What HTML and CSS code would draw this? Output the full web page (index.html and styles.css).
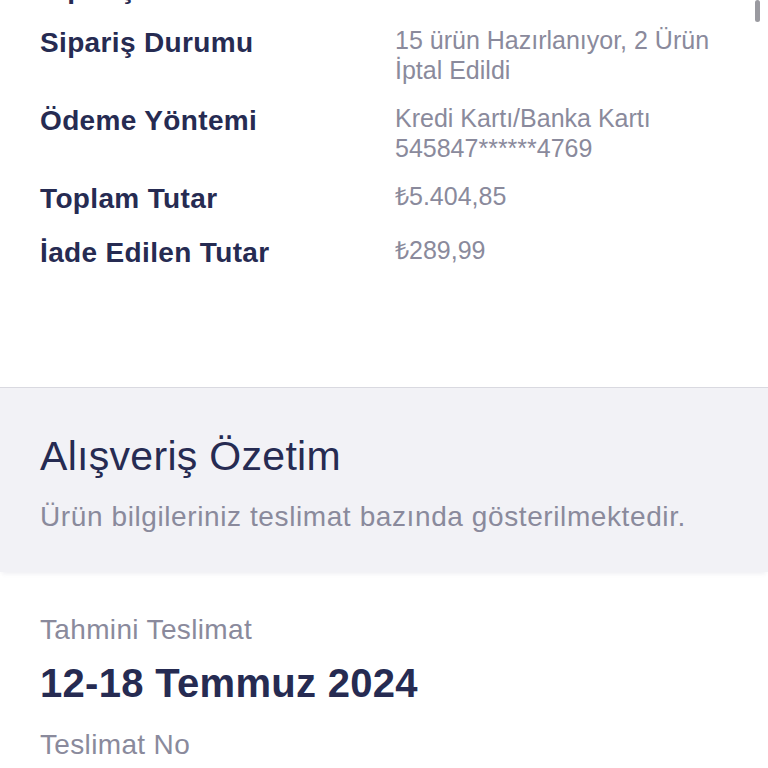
FILE: index.html
```html
<!DOCTYPE html>
<html lang="tr">
<head>
<meta charset="utf-8">
<link rel="stylesheet" href="styles.css">
</head>
<body>
<div class="page">
  <section class="details">
    <div class="row">
      <div class="label">Sipariş Tarihi</div>
      <div class="value">10 Temmuz 2024</div>
    </div>
    <div class="row">
      <div class="label">Sipariş Durumu</div>
      <div class="value">15 ürün Hazırlanıyor, 2 Ürün<br>İptal Edildi</div>
    </div>
    <div class="row">
      <div class="label">Ödeme Yöntemi</div>
      <div class="value">Kredi Kartı/Banka Kartı<br>545847******4769</div>
    </div>
    <div class="row">
      <div class="label">Toplam Tutar</div>
      <div class="value">₺5.404,85</div>
    </div>
    <div class="row">
      <div class="label">İade Edilen Tutar</div>
      <div class="value">₺289,99</div>
    </div>
  </section>
  <section class="summary">
    <h2 class="summary-title">Alışveriş Özetim</h2>
    <p class="summary-sub">Ürün bilgileriniz teslimat bazında gösterilmektedir.</p>
  </section>
  <section class="delivery">
    <div class="muted">Tahmini Teslimat</div>
    <div class="date">12-18 Temmuz 2024</div>
    <div class="muted no">Teslimat No</div>
  </section>
  <div class="scrollbar"></div>
</div>
</body>
</html>
```

FILE: styles.css
```css
html, body {
  margin: 0;
  padding: 0;
  background: #ffffff;
  overflow: hidden;
}
body {
  font-family: "Liberation Sans", Arial, sans-serif;
  color: #262b52;
}
.page {
  position: relative;
  width: 768px;
  height: 768px;
  overflow: hidden;
}
.details {
  display: flex;
  flex-direction: column;
  gap: 18px;
  margin-top: -29px;
  padding: 0 0 116px 40px;
}
.row {
  display: grid;
  grid-template-columns: 355px 1fr;
  align-items: start;
}
.label {
  font-size: 28px;
  line-height: 36px;
  font-weight: 700;
  letter-spacing: 0.35px;
  color: #262b52;
}
.value {
  font-size: 25px;
  line-height: 30px;
  color: #8a8a9c;
}
.summary {
  background: #f2f2f6;
  border-top: 1px solid #d9d9e0;
  padding: 45px 40px 39px;
  box-shadow: 0 4px 4px -2px rgba(230,230,236,0.6);
}
.summary-title {
  margin: 0;
  font-size: 41px;
  line-height: 46px;
  font-weight: 400;
  letter-spacing: 0.3px;
  color: #262b52;
}
.summary-sub {
  margin: 22px 0 0;
  font-size: 28px;
  line-height: 32px;
  letter-spacing: 0.6px;
  color: #8a8a9c;
}
.delivery {
  padding: 42px 40px 0;
  display: flex;
  flex-direction: column;
}
.muted {
  font-size: 28px;
  line-height: 32px;
  letter-spacing: 0.35px;
  color: #8a8a9c;
}
.date {
  margin-top: 14px;
  font-size: 40px;
  line-height: 46px;
  font-weight: 700;
  letter-spacing: 0.3px;
  color: #262b52;
}
.no {
  margin-top: 23px;
}
.scrollbar {
  position: absolute;
  top: 0;
  right: 8px;
  width: 5px;
  height: 22px;
  border-radius: 3px;
  background: #9a9aa0;
}
```
